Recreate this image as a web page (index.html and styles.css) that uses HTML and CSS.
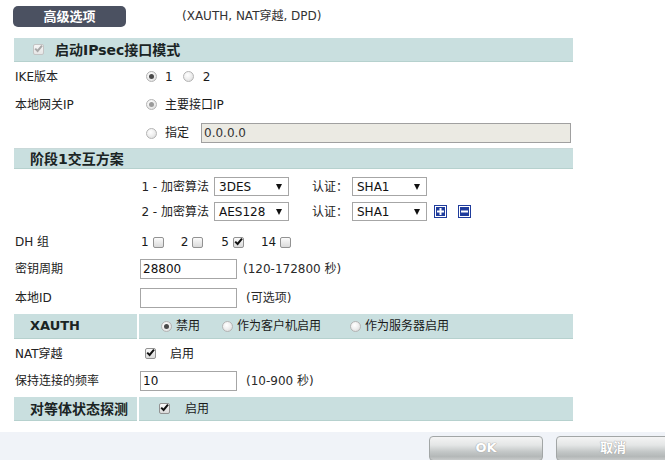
FILE: index.html
```html
<!DOCTYPE html>
<html>
<head>
<meta charset="utf-8">
<link rel="stylesheet" href="styles.css">
</head>
<body>
<div class="top">
  <div class="adv-btn">高级选项</div>
  <span class="note">(XAUTH, NAT穿越, DPD)</span>
</div>
<div class="panel">
  <div class="bar bar1">
    <span class="cb cb-dis"><svg viewBox="0 0 11 11" width="11" height="11"><path d="M2.2 5.6 L4.6 8 L9 2.6" fill="none" stroke="#a8a8a8" stroke-width="2"/></svg></span>
    <span class="bar-title">启动IPsec接口模式</span>
  </div>
  <div class="row r-ike">
    <span class="lbl">IKE版本</span>
    <div class="ctl ctl-r">
      <span class="rd on"></span><span class="t m8">1</span>
      <span class="rd m10"></span><span class="t m9">2</span>
    </div>
  </div>
  <div class="row r-gw">
    <span class="lbl">本地网关IP</span>
    <div class="ctl ctl-r">
      <span class="rd on dis"></span><span class="t m8">主要接口IP</span>
    </div>
  </div>
  <div class="row r-spec">
    <span class="lbl"></span>
    <div class="ctl ctl-r">
      <span class="rd"></span><span class="t m8">指定</span>
      <input class="inp inp-dis" type="text" value="0.0.0.0" disabled>
    </div>
  </div>
  <div class="bar bar2"><span class="bar-title">阶段1交互方案</span></div>
  <div class="props">
    <div class="prow">
      <span class="plabel">1 - 加密算法</span>
      <div class="sel"><span>3DES</span><i class="arr"></i></div>
      <span class="auth">认证：</span>
      <div class="sel"><span>SHA1</span><i class="arr"></i></div>
    </div>
    <div class="prow">
      <span class="plabel">2 - 加密算法</span>
      <div class="sel"><span>AES128</span><i class="arr"></i></div>
      <span class="auth">认证：</span>
      <div class="sel"><span>SHA1</span><i class="arr"></i></div>
      <svg class="ico ico-plus" viewBox="0 0 13 13" width="13" height="13"><rect x="0" y="0" width="13" height="13" fill="#1f3c9c"/><rect x="1.5" y="1.5" width="10" height="10" fill="none" stroke="#fff" stroke-width="1"/><rect x="3" y="5.5" width="7" height="2" fill="#fff"/><rect x="5.5" y="3" width="2" height="7" fill="#fff"/></svg>
      <svg class="ico ico-minus" viewBox="0 0 13 13" width="13" height="13"><rect x="0" y="0" width="13" height="13" fill="#1f3c9c"/><rect x="1.5" y="1.5" width="10" height="10" fill="none" stroke="#fff" stroke-width="1"/><rect x="3" y="5.5" width="7" height="2" fill="#fff"/></svg>
    </div>
  </div>
  <div class="row r-dh">
    <span class="lbl">DH 组</span>
    <div class="ctl ctl-dh">
      <span class="t">1</span><span class="cb m4"></span>
      <span class="t m17">2</span><span class="cb m4"></span>
      <span class="t m18">5</span><span class="cb m4"><svg viewBox="0 0 11 11" width="11" height="11"><path d="M2.2 5.6 L4.6 8 L9 2.6" fill="none" stroke="#111" stroke-width="2"/></svg></span>
      <span class="t m17">14</span><span class="cb m4"></span>
    </div>
  </div>
  <div class="row r-key">
    <span class="lbl">密钥周期</span>
    <div class="ctl">
      <input class="inp inp-s" type="text" value="28800">
      <span class="hint m6">(120-172800 秒)</span>
    </div>
  </div>
  <div class="row r-id">
    <span class="lbl">本地ID</span>
    <div class="ctl">
      <input class="inp inp-s" type="text" value="">
      <span class="hint m9">(可选项)</span>
    </div>
  </div>
  <div class="bar2col bar-x">
    <div class="cell cell-l">XAUTH</div>
    <div class="cell cell-r cell-rx">
      <span class="rd on"></span><span class="t m4">禁用</span>
      <span class="rd m22"></span><span class="t m4">作为客户机启用</span>
      <span class="rd m29"></span><span class="t m4">作为服务器启用</span>
    </div>
  </div>
  <div class="row r-nat">
    <span class="lbl">NAT穿越</span>
    <div class="ctl ctl-nat">
      <span class="cb"><svg viewBox="0 0 11 11" width="11" height="11"><path d="M2.2 5.6 L4.6 8 L9 2.6" fill="none" stroke="#111" stroke-width="2"/></svg></span>
      <span class="t m14">启用</span>
    </div>
  </div>
  <div class="row r-keep">
    <span class="lbl">保持连接的频率</span>
    <div class="ctl">
      <input class="inp inp-s" type="text" value="10">
      <span class="hint m9">(10-900 秒)</span>
    </div>
  </div>
  <div class="bar2col bar-d">
    <div class="cell cell-l">对等体状态探测</div>
    <div class="cell cell-r cell-rd">
      <span class="cb"><svg viewBox="0 0 11 11" width="11" height="11"><path d="M2.2 5.6 L4.6 8 L9 2.6" fill="none" stroke="#111" stroke-width="2"/></svg></span>
      <span class="t m15">启用</span>
    </div>
  </div>
</div>
<div class="footer">
  <div class="fbtn">OK</div>
  <div class="fbtn">取消</div>
</div>
</body>
</html>
```

FILE: styles.css
```css
html, body {
  margin: 0;
  padding: 0;
}
body {
  width: 665px;
  height: 460px;
  overflow: hidden;
  background: #fff;
  font-family: "DejaVu Sans", "Noto Sans CJK SC", sans-serif;
  font-size: 12px;
  color: #222;
  line-height: 16px;
}
.top {
  height: 34px;
  box-sizing: border-box;
  padding: 6px 0 0 13px;
  display: flex;
  align-items: flex-start;
}
.adv-btn {
  width: 113px;
  height: 21px;
  line-height: 21px;
  background: #4b5161;
  border-radius: 5px;
  color: #fff;
  font-weight: bold;
  font-size: 13px;
  text-align: center;
}
.note {
  margin-left: 56px;
  line-height: 21px;
  color: #333;
}
.panel {
  margin-left: 14px;
  width: 559px;
}
.bar {
  background: #c9dfdf;
  border-bottom: 1px solid #b6d1ce;
  box-sizing: border-box;
  display: flex;
  align-items: center;
  font-weight: bold;
  font-size: 14px;
  color: #1a2424;
}
.bar1 {
  margin-top: 4px;
  height: 24px;
  padding-left: 19px;
}
.bar1 .bar-title {
  margin-left: 11px;
}
.bar2 {
  height: 20px;
  padding-left: 16px;
}
.row {
  display: flex;
  align-items: center;
}
.lbl {
  flex: none;
  width: 125px;
  padding-left: 1px;
  white-space: nowrap;
}
.ctl {
  display: flex;
  align-items: center;
  white-space: nowrap;
}
.ctl-r { padding-left: 6px; }
.ctl-dh { padding-left: 1px; }
.ctl-nat { padding-left: 5px; }
.r-ike { height: 29px; }
.r-gw { height: 27px; }
.r-spec {
  height: 30px;
  border-bottom: 1px solid #c9d9d9;
}
.r-dh { height: 26px; margin-top: 8px; }
.r-key { height: 28px; }
.r-id { height: 30px; margin-bottom: 1px; }
.r-nat { height: 29px; }
.r-keep { height: 25px; }
.t { color: #1a1a1a; }
.hint { color: #2a2a2a; }
.m4 { margin-left: 4px; }
.m6 { margin-left: 6px; }
.m8 { margin-left: 8px; }
.m9 { margin-left: 9px; }
.m10 { margin-left: 10px; }
.m14 { margin-left: 14px; }
.m15 { margin-left: 15px; }
.m17 { margin-left: 17px; }
.m18 { margin-left: 18px; }
.m22 { margin-left: 22px; }
.m29 { margin-left: 29px; }

/* radio */
.rd {
  flex: none;
  display: inline-block;
  width: 11px;
  height: 11px;
  box-sizing: border-box;
  border-radius: 50%;
  border: 1px solid #b4b4b4;
  background: radial-gradient(circle at 40% 35%, #ffffff 0%, #f0f0f0 45%, #d6d6d6 100%);
  position: relative;
}
.rd.on::after {
  content: "";
  position: absolute;
  left: 2px;
  top: 2px;
  width: 5px;
  height: 5px;
  border-radius: 50%;
  background: #4a4a4a;
}
.rd.on.dis::after {
  background: #9a9a9a;
}

/* checkbox */
.cb {
  flex: none;
  display: inline-block;
  width: 11px;
  height: 11px;
  box-sizing: border-box;
  border: 1px solid #929292;
  border-radius: 2px;
  background: linear-gradient(#fbfbfb, #dadada);
  position: relative;
}
.cb svg {
  position: absolute;
  left: -1px;
  top: -2px;
}
.cb-dis {
  border-color: #c4c4c4;
  background: linear-gradient(#f6f6f6, #e6e6e6);
}

/* inputs */
.inp {
  box-sizing: border-box;
  height: 20px;
  border: 1px solid #a6a6a6;
  padding: 0 2px;
  margin: 0;
  font-family: "DejaVu Sans", "Noto Sans CJK SC", sans-serif;
  font-size: 12px;
  color: #111;
  background: #fff;
  outline: none;
}
.inp-s { width: 97px; }
.inp-dis {
  width: 370px;
  margin-left: 12px;
  background: #ebeae3;
  color: #333;
  border-color: #a0a0a0;
}

/* proposals */
.props {
  padding-top: 8px;
  display: flex;
  flex-direction: column;
  gap: 6px;
}
.prow {
  height: 19px;
  display: flex;
  align-items: center;
}
.plabel {
  width: 195px;
  text-align: right;
  margin-right: 5px;
  white-space: nowrap;
}
.sel {
  width: 75px;
  height: 19px;
  box-sizing: border-box;
  border: 1px solid #a6a6a6;
  background: #fff;
  display: flex;
  align-items: center;
  justify-content: space-between;
  padding: 0 6px 0 4px;
  color: #111;
}
.arr {
  width: 0;
  height: 0;
  border-left: 3px solid transparent;
  border-right: 3px solid transparent;
  border-top: 6px solid #111;
}
.auth {
  width: 40px;
  margin-left: 23px;
  white-space: nowrap;
}
.ico { flex: none; display: block; }
.ico-plus { margin-left: 7px; }
.ico-minus { margin-left: 11px; }

/* two column bars */
.bar2col {
  display: flex;
  gap: 2px;
}
.cell {
  background: #c9dfdf;
  border-bottom: 1px solid #b6d1ce;
  box-sizing: border-box;
  display: flex;
  align-items: center;
  white-space: nowrap;
}
.cell-l {
  width: 123px;
  padding-left: 16px;
  font-weight: bold;
  color: #1a2424;
}
.cell-r { flex: 1; }
.bar-x .cell { height: 25px; }
.bar-x .cell-l { font-size: 13px; }
.bar-d { margin-top: 4px; }
.bar-d .cell { height: 24px; }
.bar-d .cell-l { font-size: 14px; }
.cell-rx { padding-left: 22px; }
.cell-rd { padding-left: 20px; }

/* footer */
.footer {
  margin-top: 11px;
  height: 28px;
  background: #f0f3f8;
  box-sizing: border-box;
  padding: 4px 0 0 429px;
  display: flex;
  gap: 13px;
  overflow: hidden;
}
.fbtn {
  flex: none;
  width: 114px;
  height: 25px;
  box-sizing: border-box;
  border: 1px solid #a2a6a6;
  border-radius: 4px;
  background: linear-gradient(#f4f4f4 0%, #e4e6e6 35%, #c2c6c6 65%, #b4b8b8 85%, #c8cbcb 100%);
  color: #fff;
  font-weight: bold;
  font-size: 13px;
  line-height: 22px;
  text-align: center;
  text-shadow: 0 0 1px #9a9a9a, 0 0 1px #9a9a9a;
}
```
